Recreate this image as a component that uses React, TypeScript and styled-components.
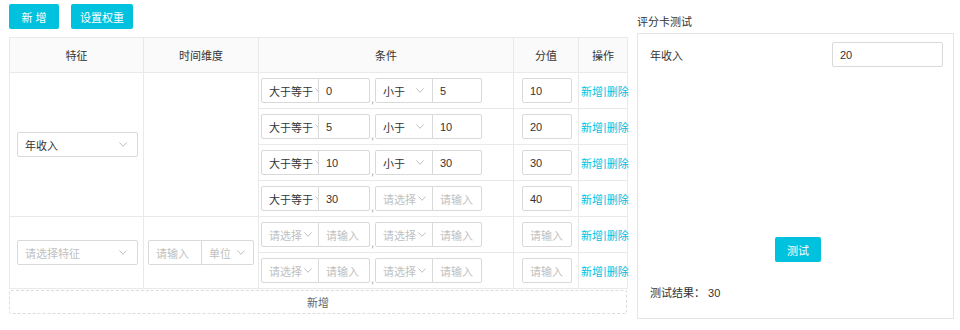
import React from "react";
import styled, { createGlobalStyle } from "styled-components";

const Global = createGlobalStyle`
  html, body { margin: 0; padding: 0; background: #fff; }
  body {
    font-family: "Liberation Sans", "Noto Sans CJK SC", sans-serif;
    font-size: 11px;
    color: #333;
  }
  * { box-sizing: border-box; }
`;

const PRIMARY = "#00c1de";
const LINE = "#e9e9e9";
const FIELD = "#d9d9d9";

const Page = styled.div`
  display: flex;
  gap: 10px;
  padding: 4px 0 0 9px;
`;

const LeftCol = styled.div`
  width: 618px;
  display: flex;
  flex-direction: column;
`;

const Toolbar = styled.div`
  display: flex;
  gap: 12px;
  margin-bottom: 8px;
`;

const Button = styled.button<{ $w: number }>`
  width: ${(p) => p.$w}px;
  height: 25px;
  border: none;
  border-radius: 2px;
  background: ${PRIMARY};
  color: #fff;
  font-family: inherit;
  font-size: 11px;
  padding: 0;
  cursor: pointer;
`;

const Table = styled.table`
  border-collapse: collapse;
  table-layout: fixed;
  width: 619px;
  border: 1px solid ${LINE};
`;

const Th = styled.th<{ $w: number }>`
  width: ${(p) => p.$w}px;
  height: 35px;
  padding: 0;
  background: #fafafa;
  border: 1px solid ${LINE};
  font-weight: normal;
  color: #333;
  font-size: 11px;
  text-align: center;
`;

const Td = styled.td<{ $pl?: number }>`
  height: 36px;
  padding: 0 0 0 ${(p) => p.$pl ?? 0}px;
  border: 1px solid ${LINE};
  vertical-align: middle;
`;

const Group = styled.div`
  display: flex;
  align-items: center;
`;

const Field = styled.div<{ $w: number; $ph?: boolean; $join?: "left" | "right"; $pr?: number }>`
  width: ${(p) => p.$w}px;
  height: 25px;
  border: 1px solid ${FIELD};
  border-radius: ${(p) =>
    p.$join === "left" ? "2px 0 0 2px" : p.$join === "right" ? "0 2px 2px 0" : "2px"};
  ${(p) => (p.$join === "right" ? "margin-left: -1px;" : "")}
  display: flex;
  align-items: center;
  justify-content: space-between;
  overflow: hidden;
  padding: 0 ${(p) => p.$pr ?? 8}px 0 7px;
  color: ${(p) => (p.$ph ? "#bfbfbf" : "#333")};
  background: #fff;
  white-space: nowrap;
  span { flex-shrink: 0; }
  svg { flex-shrink: 0; margin-left: 2px; }
`;

const Comma = styled.span`
  width: 5px;
  align-self: flex-end;
  color: #999;
  font-size: 11px;
  line-height: 10px;
  padding-left: 1px;
  margin-bottom: -1px;
`;

const Links = styled.div`
  display: flex;
  align-items: center;
  color: ${PRIMARY};
  font-size: 11px;
  white-space: nowrap;
`;

const Sep = styled.span`
  padding: 0 0.5px;
`;

const AddRow = styled.div`
  height: 24px;
  margin-top: 1px;
  border: 1px dashed #dcdcdc;
  border-radius: 2px;
  display: flex;
  align-items: center;
  justify-content: center;
  color: #666;
`;

const RightCol = styled.div`
  width: 317px;
  padding-top: 10px;
  display: flex;
  flex-direction: column;
`;

const Title = styled.div`
  line-height: 16px;
  margin-bottom: 3px;
  color: #333;
`;

const Panel = styled.div`
  height: 286px;
  border: 1px solid #e5e5e5;
  padding: 8px 10px 15px 12px;
  display: flex;
  flex-direction: column;
`;

const PanelRow = styled.div`
  display: flex;
  align-items: center;
  justify-content: space-between;
`;

const CenterBtn = styled(Button)`
  align-self: center;
  margin-top: auto;
  margin-left: 3px;
`;

const Result = styled.div`
  margin-top: 21px;
  line-height: 20px;
  color: #333;
`;

const Chevron = () => (
  <svg width="8" height="5" viewBox="0 0 8 5">
    <polyline points="0.5,0.5 4,4.3 7.5,0.5" fill="none" stroke="#bfbfbf" strokeWidth="1" />
  </svg>
);

type Cond = { op1?: string; v1?: string; op2?: string; v2?: string; score?: string };

type FieldProps = { w: number; text: string; join?: "left" | "right"; ph?: boolean; pr?: number };

const Select = ({ w, text, join, ph, pr }: FieldProps) => (
  <Field $w={w} $join={join} $ph={ph} $pr={pr}>
    <span>{text}</span>
    <Chevron />
  </Field>
);

const Input = ({ w, text, join, ph }: FieldProps) => (
  <Field $w={w} $join={join} $ph={ph}>
    <span>{text}</span>
  </Field>
);

const CondCells = ({ c }: { c: Cond }) => (
  <>
    <Td $pl={2}>
      <Group>
        <Select w={58} text={c.op1 ?? "请选择"} ph={!c.op1} join="left" />
        <Input w={52} text={c.v1 ?? "请输入"} ph={!c.v1} join="right" />
        <Comma>,</Comma>
        <Select w={58} text={c.op2 ?? "请选择"} ph={!c.op2} join="left" />
        <Input w={50} text={c.v2 ?? "请输入"} ph={!c.v2} join="right" />
      </Group>
    </Td>
    <Td $pl={8}>
      <Input w={50} text={c.score ?? "请输入"} ph={!c.score} />
    </Td>
    <Td $pl={2}>
      <Links>
        <span>新增</span>
        <Sep>|</Sep>
        <span>删除</span>
      </Links>
    </Td>
  </>
);

const group1: Cond[] = [
  { op1: "大于等于", v1: "0", op2: "小于", v2: "5", score: "10" },
  { op1: "大于等于", v1: "5", op2: "小于", v2: "10", score: "20" },
  { op1: "大于等于", v1: "10", op2: "小于", v2: "30", score: "30" },
  { op1: "大于等于", v1: "30", score: "40" },
];

const group2: Cond[] = [{}, {}];

export default function App() {
  return (
    <>
      <Global />
      <Page>
        <LeftCol>
          <Toolbar>
            <Button $w={50}>新 增</Button>
            <Button $w={62}>设置权重</Button>
          </Toolbar>
          <Table>
            <thead>
              <tr>
                <Th $w={134}>特征</Th>
                <Th $w={115}>时间维度</Th>
                <Th $w={255}>条件</Th>
                <Th $w={65}>分值</Th>
                <Th $w={49}>操作</Th>
              </tr>
            </thead>
            <tbody>
              {group1.map((c, i) => (
                <tr key={"a" + i}>
                  {i === 0 && (
                    <>
                      <Td rowSpan={4} $pl={7}>
                        <Select w={121} text="年收入" pr={10} />
                      </Td>
                      <Td rowSpan={4} />
                    </>
                  )}
                  <CondCells c={c} />
                </tr>
              ))}
              {group2.map((c, i) => (
                <tr key={"b" + i}>
                  {i === 0 && (
                    <>
                      <Td rowSpan={2} $pl={7}>
                        <Select w={121} text="请选择特征" ph pr={10} />
                      </Td>
                      <Td rowSpan={2} $pl={4}>
                        <Group>
                          <Input w={54} text="请输入" ph join="left" />
                          <Select w={53} text="单位" ph join="right" />
                        </Group>
                      </Td>
                    </>
                  )}
                  <CondCells c={c} />
                </tr>
              ))}
            </tbody>
          </Table>
          <AddRow>新增</AddRow>
        </LeftCol>
        <RightCol>
          <Title>评分卡测试</Title>
          <Panel>
            <PanelRow>
              <span>年收入</span>
              <Input w={111} text="20" />
            </PanelRow>
            <CenterBtn $w={46}>测试</CenterBtn>
            <Result>测试结果： 30</Result>
          </Panel>
        </RightCol>
      </Page>
    </>
  );
}
